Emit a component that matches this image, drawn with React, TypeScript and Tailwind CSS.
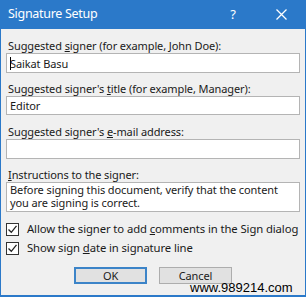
import React from "react";

const Check = () => (
  <div className="w-[13px] h-[13px] border border-[#333] bg-white flex items-center justify-center shrink-0">
    <svg width="11" height="11" viewBox="0 0 11 11">
      <path d="M1.5 5.5 L4.3 8.3 L9.5 1.8" fill="none" stroke="#222" strokeWidth="1.3" />
    </svg>
  </div>
);

export default function App() {
  return (
    <div
      className="relative w-[306px] h-[297px] bg-[#2b79c9] overflow-hidden"
      style={{ fontFamily: '"Noto Sans", "Open Sans", sans-serif' }}
    >
      <div className="h-[29px] flex items-center text-white">
        <span className="pl-[8px] text-[12.5px] tracking-[-0.3px]">Signature Setup</span>
        <span className="ml-auto mr-[40px] text-[13px]">?</span>
        <svg className="mr-[19px]" width="11" height="11" viewBox="0 0 11 11">
          <path d="M0.5 0.5 L10.5 10.5 M10.5 0.5 L0.5 10.5" stroke="white" strokeWidth="1.3" />
        </svg>
      </div>
      <div className="mx-[1px] h-[266px] bg-[#f0f0f0] px-[5px] pt-[9px] text-[#1a1a1a] text-[11px] tracking-[-0.1px]">
        <div className="flex flex-col">
          <div className="h-[15px] leading-[15px] pl-[2px]">
            Suggested <span className="underline">s</span>igner (for example, John Doe):
          </div>
          <div className="h-[20px] border border-[#b4b4b4] bg-white flex items-center pl-[3px] leading-none">
            <span className="w-px h-[13px] bg-black mr-[-1px]" />
            Saikat Basu
          </div>
          <div className="h-[15px] leading-[15px] pl-[2px] mt-[8px]">
            Suggested signer's <span className="underline">t</span>itle (for example, Manager):
          </div>
          <div className="h-[19px] border border-[#b4b4b4] bg-white flex items-center pl-[3px] leading-none">
            Editor
          </div>
          <div className="h-[15px] leading-[15px] pl-[2px] mt-[9px]">
            Suggested signer's <span className="underline">e</span>-mail address:
          </div>
          <div className="h-[20px] border border-[#b4b4b4] bg-white" />
          <div className="h-[15px] leading-[15px] pl-[2px] mt-[8px]">
            <span className="underline">I</span>nstructions to the signer:
          </div>
          <div className="h-[30px] border border-[#b4b4b4] bg-white pl-[3px] pt-[1px] leading-[12.5px]">
            Before signing this document, verify that the content
            <br />
            you are signing is correct.
          </div>
          <div className="flex items-center gap-[8px] mt-[11px] h-[13px] text-[11.3px]">
            <Check />
            <span>
              Allow the signer to add <span className="underline">c</span>omments in the Sign dialog
            </span>
          </div>
          <div className="flex items-center gap-[8px] mt-[6px] h-[13px] text-[11.3px]">
            <Check />
            <span>
              Show sign <span className="underline">d</span>ate in signature line
            </span>
          </div>
          <div className="flex justify-center gap-[12px] mt-[12px]">
            <div className="w-[73px] h-[17px] border-2 border-[#3c84c8] bg-[#e1e1e1] flex items-center justify-center leading-none">
              OK
            </div>
            <div className="w-[73px] h-[17px] border border-[#adadad] bg-[#e1e1e1] flex items-center justify-center leading-none">
              Cancel
            </div>
          </div>
        </div>
      </div>
      <div
        className="absolute left-[190px] top-[281px] text-[13px] leading-[13px] text-black"
        style={{ fontFamily: '"Liberation Sans", Arial, sans-serif' }}
      >
        www.989214.com
      </div>
    </div>
  );
}
